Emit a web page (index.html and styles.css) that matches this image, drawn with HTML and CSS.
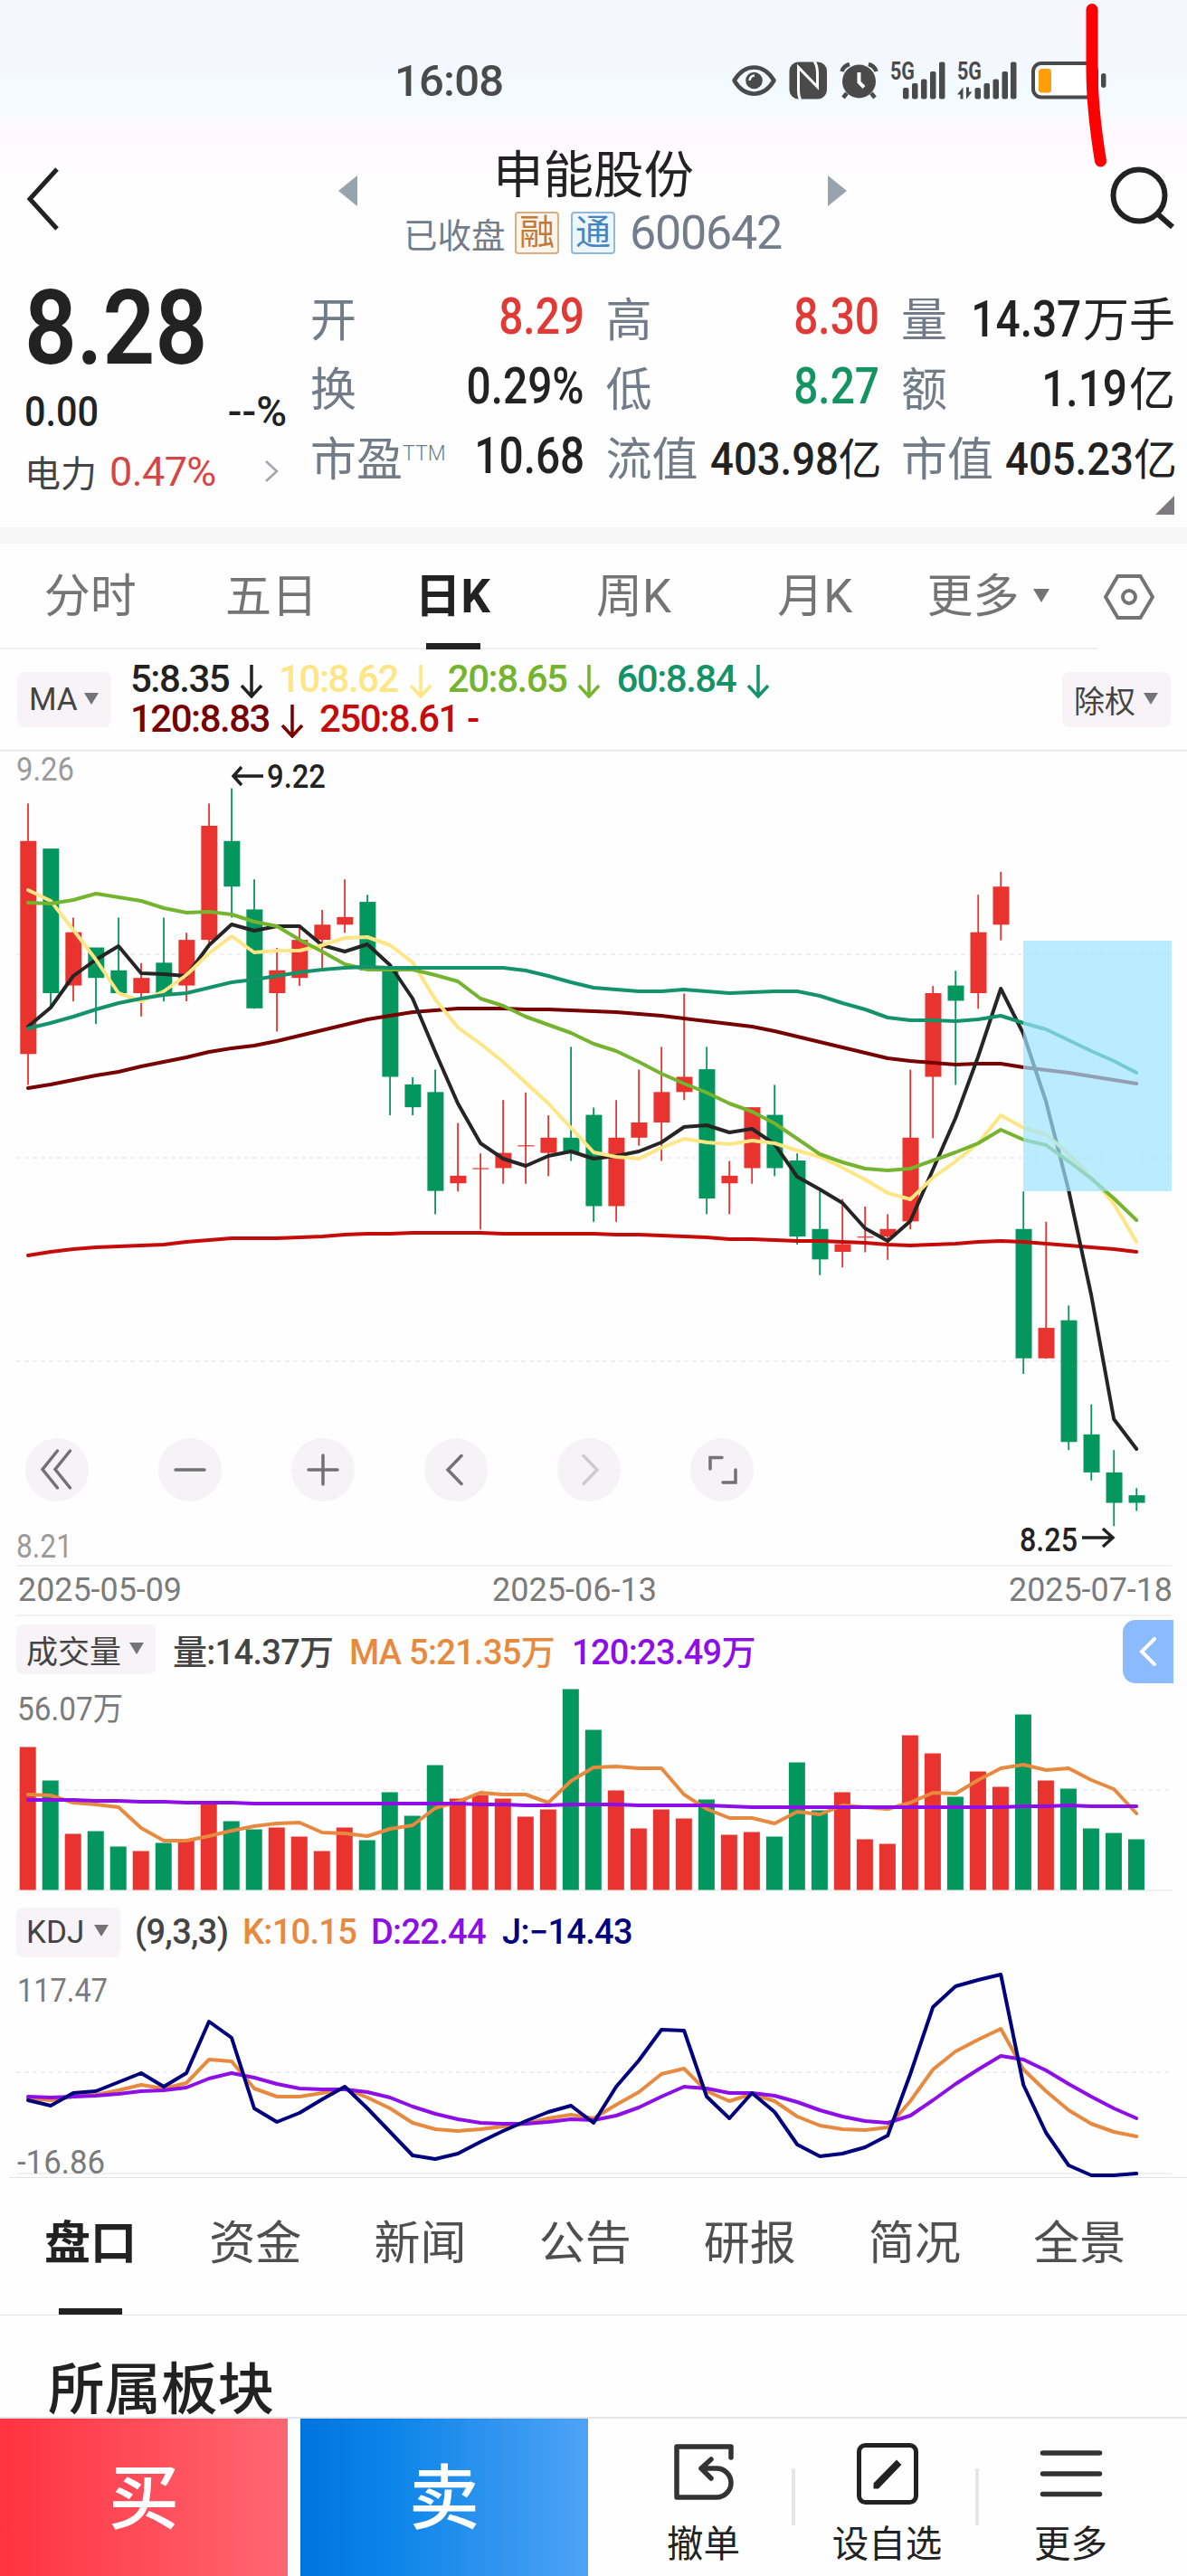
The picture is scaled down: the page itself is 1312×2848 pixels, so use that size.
FILE: index.html
```html
<!DOCTYPE html>
<html lang="zh-CN">
<head>
  <meta charset="utf-8" />
  <meta name="viewport" content="width=device-width, initial-scale=1" />
  <title>申能股份 600642</title>
  <link rel="stylesheet" href="styles.css">
</head>

<body>

  <!-- 状态栏 -->
  <div class="status-bar">
    <span class="clock">16:08</span>
    <svg class="status-icons" viewBox="800 60 430 56" width="430" height="56">
      <g fill="none" stroke="#4a4a4a" stroke-width="4.5">
        <path d="M811.500 89C823 69.500 844 69.500 855.500 89C844 108.500 823 108.500 811.500 89Z" stroke-linejoin="round" />
      </g>
      <circle cx="833.500" cy="89" r="9.300" fill="#4a4a4a" />
      <path d="M828.500 89a5.500 5.500 0 0 1 5.500-5.500" fill="none" stroke="#fff" stroke-width="2.500" />
      <rect x="872.500" y="68.500" width="41.500" height="41" rx="10" fill="#4a4a4a" />
      <path d="M884.500 110Q882.500 106 882.500 100V74.500L903.500 96V82Q903.500 72 900 68" fill="none" stroke="#fff" stroke-width="3" />
      <path d="M887.500 84V104" fill="none" stroke="#4a4a4a" stroke-width="4" />
      <g fill="none" stroke="#4a4a4a" stroke-width="4">
        <path d="M930.500 79Q932 73 939 71M968.500 79Q967 73 960 71M936 103L932 108M963 103L967 108" stroke-width="4.500" />
      </g>
      <circle cx="949.500" cy="90" r="18.500" fill="#4a4a4a" />
      <path d="M949.500 80V91L955 96.500" fill="none" stroke="#fff" stroke-width="4" />
      <g fill="#4a4a4a">
        <text x="984" y="88" class="net" textLength="27" lengthAdjust="spacingAndGlyphs">5G</text>
        <rect x="998" y="97" width="6.500" height="12.500" rx="2" />
        <rect x="1008" y="92" width="6.500" height="17.500" rx="2" />
        <rect x="1018" y="87.500" width="6.500" height="22" rx="2" />
        <rect x="1028" y="79" width="6.500" height="30.500" rx="2" />
        <rect x="1038" y="68.500" width="6.500" height="41" rx="2" />
        <text x="1058" y="88" class="net" textLength="27" lengthAdjust="spacingAndGlyphs">5G</text>
        <path d="M1058 104.500L1064.500 96.500V109.500H1061.500V104.500ZM1074.500 101.500L1068 109.500V96.500H1071V101.500Z" />
        <rect x="1077.500" y="97" width="6.500" height="12.500" rx="2" />
        <rect x="1087.500" y="92" width="6.500" height="17.500" rx="2" />
        <rect x="1097.500" y="87.500" width="6.500" height="22" rx="2" />
        <rect x="1107.500" y="79" width="6.500" height="30.500" rx="2" />
        <rect x="1117" y="68.500" width="6.500" height="41" rx="2" />
        <rect x="1217" y="81" width="5.500" height="16" rx="2.700" />
      </g>
      <rect x="1142" y="70" width="70" height="37.500" rx="9" fill="#fff" stroke="#4a4a4a" stroke-width="4" />
      <rect x="1148" y="76" width="14" height="26.500" rx="3.500" fill="#ff9f0a" />
    </svg>
  </div>
  <svg class="pen-mark" viewBox="0 0 40 190" width="40" height="190">
    <path d="M17 10.500V75Q17 120 26.500 178" />
  </svg>

  <!-- 标题 -->
  <div class="header">
    <svg class="back" viewBox="0 0 40 70" width="40" height="70"><path d="M35 2L5 35L35 68" /></svg>
    <i class="arrow-left"></i>
    <div class="stock">
      <div class="stock-name">申能股份</div>
      <div class="stock-sub">
        <span class="closed">已收盘</span>
        <span class="tag rong">融</span>
        <span class="tag tong">通</span>
        <span class="code">600642</span>
      </div>
    </div>
    <i class="arrow-right"></i>
    <svg class="search" viewBox="0 0 72 72" width="72" height="72"><circle cx="32" cy="32" r="28.500" /><path d="M53 53L69 67" /></svg>
  </div>

  <!-- 行情 -->
  <div class="quote">
    <div class="quote-left">
      <div class="price">8.28</div>
      <div class="change"><span class="diff">0.00</span><span class="rate">--%</span></div>
      <div class="sector">
        <span>电力</span><b>0.47%</b>
        <svg viewBox="0 0 16 26" width="16" height="26"><path d="M2 2L14 13L2 24" /></svg>
      </div>
    </div>
    <div class="quote-grid">
      <div><label>开</label><span class="up"><i>8.29</i></span></div>
      <div><label>高</label><span class="up"><i>8.30</i></span></div>
      <div><label>量</label><span><i>14.37</i><em>万手</em></span></div>
      <div><label>换</label><span><i>0.29%</i></span></div>
      <div><label>低</label><span class="down"><i>8.27</i></span></div>
      <div><label>额</label><span><i>1.19</i><em>亿</em></span></div>
      <div><label>市盈<sup>TTM</sup></label><span><i>10.68</i></span></div>
      <div><label>流值</label><span class="small"><i>403.98</i><em>亿</em></span></div>
      <div><label>市值</label><span class="small"><i>405.23</i><em>亿</em></span></div>
    </div>
    <i class="corner"></i>
  </div>

  <!-- 周期 -->
  <div class="period-tabs">
    <span>分时</span>
    <span>五日</span>
    <span class="active">日K</span>
    <span>周K</span>
    <span>月K</span>
    <span class="more">更多<i class="tri"></i></span>
    <svg viewBox="0 0 56 50" width="56" height="50"><path d="M15.500 2H40.500L54 25L40.500 48H15.500L2 25Z" /><circle cx="28" cy="25" r="7" /></svg>
  </div>

  <!-- 均线 -->
  <div class="ma-row">
    <div class="badge ma-badge">MA<i class="tri"></i></div>
    <div class="ma-values">
      <div>
        <span class="m5">5:8.35<svg><use href="#down" /></svg></span>
        <span class="m10">10:8.62<svg><use href="#down" /></svg></span>
        <span class="m20">20:8.65<svg><use href="#down" /></svg></span>
        <span class="m60">60:8.84<svg><use href="#down" /></svg></span>
      </div>
      <div>
        <span class="m120">120:8.83<svg><use href="#down" /></svg></span>
        <span class="m250">250:8.61 -</span>
      </div>
    </div>
    <div class="badge adj-badge">除权<i class="tri"></i></div>
  </div>
  <svg class="defs"><symbol id="down" viewBox="0 0 26 38"><path d="M13 1V35M2 24L13 36L24 24" fill="none" stroke="currentColor" stroke-width="3.500" /></symbol></svg>

  <!-- K线图 -->
  <div class="chart-box">
    <svg id="kline" viewBox="0 829 1312 958" width="1312" height="958"></svg>
    <div class="tools">
      <button><svg viewBox="0 0 70 70"><path d="M35.500 14L19 34.500L35.500 55M49.500 14L33 34.500L49.500 55" /></svg></button>
      <button><svg viewBox="0 0 70 70"><path d="M19 35H51" /></svg></button>
      <button><svg viewBox="0 0 70 70"><path d="M19 35H51M35 19V51" /></svg></button>
      <button><svg viewBox="0 0 70 70"><path d="M41 19.500L26 35L41 50.500" /></svg></button>
      <button class="off"><svg viewBox="0 0 70 70"><path d="M29 19.500L44 35L29 50.500" /></svg></button>
      <button><svg viewBox="0 0 70 70"><path d="M22 34V21.500H35M36 49H50V35" /></svg></button>
    </div>
  </div>

  <!-- 成交量 -->
  <div class="ind-row vol-row">
    <div class="badge">成交量<i class="tri"></i></div>
    <span class="vol">量:14.37万</span>
    <span class="orange">MA 5:21.35万</span>
    <span class="purple">120:23.49万</span>
    <div class="side-btn"><svg viewBox="0 0 20 32" width="20" height="32"><path d="M17 2L3 16L17 30" /></svg></div>
  </div>
  <svg id="volume" viewBox="0 1862 1312 230" width="1312" height="230"></svg>

  <!-- KDJ -->
  <div class="ind-row kdj-row">
    <div class="badge">KDJ<i class="tri"></i></div>
    <span class="par">(9,3,3)</span>
    <span class="orange">K:10.15</span>
    <span class="purple">D:22.44</span>
    <span class="navy">J:−14.43</span>
  </div>
  <svg id="kdj" viewBox="0 2176 1312 232" width="1312" height="232"></svg>

  <!-- 资讯 -->
  <div class="info-tabs">
    <span class="active">盘口</span>
    <span>资金</span>
    <span>新闻</span>
    <span>公告</span>
    <span>研报</span>
    <span>简况</span>
    <span>全景</span>
  </div>
  <div class="section-title">所属板块</div>

  <!-- 底部操作 -->
  <div class="bottom-bar">
    <div class="trade buy">买</div>
    <div class="trade sell">卖</div>
    <div class="action">
      <svg viewBox="0 0 72 72" width="72" height="72" stroke="#333"><path d="M66 18V6H6V62H50A16 16 0 0 0 50 30H33M44 20L33 30L44 41" stroke-width="5.500" stroke-linecap="round" stroke-linejoin="round" /></svg>
      <span>撤单</span>
    </div>
    <div class="action">
      <svg viewBox="0 0 72 72" width="72" height="72" stroke="#222"><rect x="4.500" y="4.500" width="63" height="63" rx="7" stroke-width="5" /><path d="M21.500 51.500V47L46 22L50 26L25.500 51.500Z" fill="#222" stroke-width="2" /></svg>
      <span>设自选</span>
    </div>
    <div class="action">
      <svg viewBox="0 0 72 72" width="72" height="72" stroke="#333"><path d="M4.500 13H67.500M4.500 36H67.500M4.500 58.500H67.500" stroke-width="5.500" stroke-linecap="round" /></svg>
      <span>更多</span>
    </div>
  </div>

  <script src="chart.js"></script>
</body>
</html>
```
FILE: styles.css
```css
* {
  box-sizing: border-box;
}

body {
  margin: 0;
  width: 1312px;
  height: 2848px;
  overflow: hidden;
  position: relative;
  color: #222;
  font-family: Roboto, "Noto Sans CJK SC", sans-serif;
  background: linear-gradient(#f5f6fe 0, #f5f7fe 60px, #f3fbff 105px, #fff9ff 150px, #fefefe 200px);
}

svg {
  display: block;
  fill: none;
}

i, em {
  font-style: normal;
}

/* 状态栏 */
.status-bar {
  height: 150px;
  padding: 60px 82px 0 436px;
  display: flex;
  justify-content: space-between;
  align-items: flex-start;
}

.clock {
  font-size: 49px;
  line-height: 60px;
  font-weight: 500;
  color: #4a4a4a;
  letter-spacing: -0.8px;
}

.net {
  font-size: 27px;
  font-weight: 700;
}

.pen-mark {
  position: absolute;
  left: 1190px;
  top: 0;
}

.pen-mark path {
  stroke: #f00;
  stroke-width: 13;
  stroke-linecap: round;
}

/* 标题 */
.header {
  height: 160px;
  display: flex;
  align-items: flex-start;
}

.back {
  margin: 35px 306px 0 28px;
  stroke: #222;
  stroke-width: 5;
}

.arrow-left, .arrow-right {
  margin-top: 44px;
  border: 17.5px solid transparent;
}

.arrow-left {
  border-left: 0;
  border-right: 21px solid #98a4ad;
}

.arrow-right {
  border-right: 0;
  border-left: 21px solid #98a4ad;
}

.stock {
  width: 520px;
  text-align: center;
}

.stock-name {
  font-size: 55.5px;
  line-height: 60px;
  margin: 15px 0 0 2px;
}

.stock-sub {
  display: flex;
  align-items: center;
  height: 50px;
  margin: 7px 0 0 51px;
  color: #727c8a;
}

.closed {
  font-size: 37.5px;
  width: 123px;
  text-align: left;
}

.tag {
  width: 49px;
  height: 47px;
  line-height: 43px;
  font-size: 39px;
  border: 2px solid;
  border-radius: 4px;
  margin-right: 13px;
}

.rong {
  color: #c27a36;
  background: #fdf5ec;
  border-color: #d8ae84;
}

.tong {
  color: #4486c0;
  background: #eef6fd;
  border-color: #8fb9dd;
}

.code {
  font-size: 52px;
  margin-left: 3px;
  letter-spacing: -1.2px;
}

.search {
  margin: 34px 0 0 291px;
  stroke: #222;
  stroke-width: 6;
}

/* 行情 */
.quote {
  height: 291px;
  display: flex;
  position: relative;
  border-bottom: 18px solid #f6f6f6;
}

.quote-left {
  width: 343px;
  padding-left: 27px;
}

.price {
  height: 106px;
  font-size: 115px;
  line-height: 106px;
  font-weight: 600;
  transform: scaleX(.88);
  transform-origin: left;
}

.change {
  width: 290px;
  display: flex;
  justify-content: space-between;
  font-size: 46px;
  font-weight: 500;
  line-height: 78px;
}

.diff {
  transform: scaleX(.9);
  transform-origin: left;
}

.sector {
  display: flex;
  align-items: center;
  height: 54px;
  font-size: 40px;
  color: #444;
}

.sector b {
  font-size: 45px;
  font-weight: 400;
  letter-spacing: -0.6px;
  color: #d64545;
  margin: 0 53px 0 14px;
}

.sector svg {
  stroke: #a0a6ae;
  stroke-width: 2.5;
}

.quote-grid {
  display: grid;
  grid-template-columns: repeat(3, 303px);
  grid-auto-rows: 77px;
  column-gap: 23.5px;
  margin-top: 1px;
}

.quote-grid div {
  display: flex;
  justify-content: space-between;
  align-items: center;
  white-space: nowrap;
}

.quote-grid label {
  font-size: 51px;
  color: #727c88;
}

.quote-grid sup {
  font-size: 23px;
  font-weight: 300;
  vertical-align: 17px;
  line-height: 0;
}

.quote-grid span {
  font-size: 55px;
  font-weight: 500;
}

/* 数字压窄 */
.quote-grid i {
  display: inline-block;
  margin-left: -30px;
  transform: scaleX(.87);
  transform-origin: right;
}

.quote-grid em {
  font-size: 51px;
  font-weight: 400;
  margin-left: 2px;
}

.quote-grid .small {
  font-size: 50px;
}

.quote-grid .small i {
  transform: scaleX(.91);
}

.quote-grid .small em {
  font-size: 48px;
  margin: 0 -2px 0 0;
}

.quote-grid .up {
  color: #e03a36;
}

.quote-grid .down {
  color: #159463;
}

.corner {
  position: absolute;
  right: 14px;
  bottom: 14px;
  border-left: 21px solid transparent;
  border-bottom: 21px solid #7d7b80;
}

/* 周期 */
.period-tabs {
  height: 117px;
  display: flex;
  align-items: center;
  font-size: 51px;
  color: #747474;
  background: linear-gradient(#f0f0f0, #f0f0f0) 0 100% / 1214px 2px no-repeat;
}

.period-tabs span {
  width: 200.3px;
  height: 117px;
  line-height: 117px;
  text-align: center;
  text-indent: -1px;
}

.period-tabs .more {
  width: 219px;
  display: flex;
  align-items: center;
  padding-left: 24px;
}

.period-tabs .tri {
  margin: 0 0 3px 15px;
  border-width: 15px 9px 0;
}

.period-tabs svg {
  stroke: #747474;
  stroke-width: 4;
}

.active {
  position: relative;
  font-weight: 700;
  color: #222;
}

.active::after {
  content: "";
  position: absolute;
  left: 50%;
  bottom: 0;
  width: 60px;
  height: 7px;
  margin-left: -30px;
  background: #222;
}

.tri {
  display: inline-block;
  margin-bottom: 3px;
  border: 8px solid transparent;
  border-top: 13px solid #747474;
  border-bottom: 0;
}

.badge {
  display: flex;
  align-items: center;
  justify-content: space-between;
  border-radius: 8px;
  background: #f7f3f7;
  color: #444;
  font-size: 35px;
}

/* 均线 */
.ma-row {
  height: 111px;
  display: flex;
  align-items: center;
  padding: 0 18px 0 19px;
}

.ma-badge, .adj-badge {
  height: 61px;
  width: 104px;
  padding: 0 14px 0 13px;
}

.adj-badge {
  width: 120px;
  font-size: 34px;
}

.ma-values {
  flex: 1;
  padding: 0 0 2px 21px;
  font-size: 42px;
  font-weight: 500;
  line-height: 44px;
  letter-spacing: -1.5px;
}

.ma-values div {
  display: flex;
  height: 44px;
}

.ma-values span {
  display: flex;
  align-items: center;
  white-space: pre;
  margin-right: 17px;
}

.ma-values svg {
  width: 26px;
  height: 38px;
  margin: 4px 0 0 12px;
}

.m5 { color: #222; }
.m10 { color: #fee684; }
.m20 { color: #74b42f; }
.m60 { color: #14936a; }
.m120 { color: #780000; }
.m250 { color: #c60b0b; }

.defs {
  position: absolute;
  width: 0;
  height: 0;
}

/* 图表 */
.chart-box {
  position: relative;
  height: 958px;
}

.tools {
  position: absolute;
  left: 28px;
  top: 761px;
  display: flex;
  gap: 77px;
}

.tools button {
  width: 70px;
  height: 70px;
  padding: 0;
  border: 0;
  border-radius: 50%;
  background: #f6f3f7;
}

.tools path {
  stroke: #727272;
  stroke-width: 3.5;
  stroke-linecap: round;
}

.tools .off path {
  stroke: #ccc;
}

.ind-row {
  position: relative;
  display: flex;
  align-items: center;
  padding-left: 18px;
  font-size: 38px;
  font-weight: 500;
  letter-spacing: -0.7px;
  white-space: pre;
}

.ind-row .badge {
  height: 55px;
  padding: 0 13px 0 11px;
  font-weight: 400;
  letter-spacing: 0;
}

.vol-row {
  height: 75px;
  padding-bottom: 2px;
}

.vol-row .badge {
  width: 154px;
}

.kdj-row {
  height: 84px;
  padding-top: 4px;
}

.kdj-row .badge {
  width: 115px;
}

.vol {
  width: 195px;
  margin-left: 19px;
  color: #444;
}

.par {
  width: 119px;
  margin-left: 16px;
  color: #444;
}

.orange { color: #e78a40; }
.purple { color: #8d0ee6; }
.navy { color: #00007f; }

.vol-row .orange { width: 246px; }
.kdj-row .orange { width: 142px; }
.kdj-row .purple { width: 145px; }

.side-btn {
  position: absolute;
  left: 1241px;
  top: 4px;
  width: 56px;
  height: 70px;
  padding: 19px 18px;
  background: #8bbaff;
  border-radius: 14px 0 0 14px;
}

.side-btn path {
  stroke: #fff;
  stroke-width: 4;
  stroke-linecap: round;
}

/* 图内文字 */
.axis { fill: #7b7b7b; font-size: 36px; }
.pale { fill: #9b9a9c; font-size: 37px; }
.mark { fill: #222; font-size: 36px; font-weight: 500; }
.line { stroke-width: 4; stroke-linejoin: round; stroke-linecap: round; }
.grid { stroke: #f1eff2; stroke-width: 2; stroke-dasharray: 5 4; }
.base { stroke: #f1f1f2; stroke-width: 2; }

/* 资讯 */
.info-tabs {
  height: 152px;
  display: flex;
  padding-left: 9px;
  font-size: 51px;
  line-height: 146px;
  color: #4f4f4f;
  border-bottom: 1px solid #e4e4e4;
}

.info-tabs span {
  width: 182.2px;
  text-align: center;
}

.info-tabs .active::after {
  width: 70px;
  margin-left: -35px;
}

.section-title {
  height: 114px;
  padding-left: 53px;
  font-size: 62.5px;
  font-weight: 500;
  line-height: 165px;
  overflow: hidden;
  border-bottom: 2px solid #e6e4e6;
}

/* 底部操作 */
.bottom-bar {
  display: flex;
  height: 174px;
  background: #fefefe;
}

.trade {
  width: 318px;
  margin-right: 14px;
  text-align: center;
  font-size: 78px;
  font-weight: 500;
  line-height: 180px;
  color: #fff;
}

.buy {
  background: linear-gradient(90deg, #ff3341, #ff6672);
}

.sell {
  margin-right: 26px;
  background: linear-gradient(90deg, #0074df, #0a84e8 30%, #4fa3f6);
}

.action {
  width: 203px;
  display: flex;
  flex-direction: column;
  align-items: center;
  padding-top: 25px;
  background: linear-gradient(#e6e6e6, #e6e6e6) 100% 55px / 4px 63px no-repeat;
}

.action:last-child {
  background: none;
}

.action span {
  font-size: 40.5px;
  line-height: 50px;
  margin-top: 17px;
}
```
FILE: chart.js
```js
const UP = "#e9332f";
const DOWN = "#03965f";
const STEP = 25.005;

// 颜色, 最高, 实体上沿, 实体下沿, 最低 (单位: 分)
const candles = [
  ["r", 920, 915, 887, 883], ["g", 914, 914, 895, 893], ["r", 905, 903, 896, 894], ["g", 901, 901, 897, 891],
  ["g", 905, 898, 895, 895], ["r", 899, 897, 895, 892], ["g", 905, 899, 895, 894], ["r", 903, 902, 896, 894],
  ["r", 920, 917, 902, 901], ["g", 922, 915, 909, 905], ["g", 910, 906, 893, 893], ["r", 901, 898, 895, 890],
  ["r", 904, 902, 897, 896], ["r", 906, 904, 902, 898], ["r", 910, 905, 904, 903], ["g", 908, 907, 898, 898],
  ["g", 898, 898, 884, 879], ["g", 884, 883, 880, 879], ["g", 885, 882, 869, 866], ["r", 878, 871, 870, 869],
  ["r", 874, 872, 872, 864], ["r", 881, 874, 872, 870], ["r", 882, 875, 875, 870], ["r", 879, 876, 874, 871],
  ["g", 888, 876, 874, 873], ["g", 880, 879, 867, 865], ["r", 881, 876, 867, 865], ["r", 885, 878, 876, 875],
  ["r", 888, 882, 878, 873], ["r", 895, 884, 882, 881], ["g", 888, 885, 868, 866], ["r", 873, 871, 870, 866],
  ["r", 880, 880, 872, 870], ["g", 883, 879, 872, 871], ["g", 874, 873, 863, 862], ["g", 869, 864, 860, 858],
  ["r", 868, 862, 861, 859], ["r", 867, 863, 863, 861], ["r", 866, 864, 863, 860], ["r", 885, 876, 865, 864],
  ["r", 896, 895, 884, 876], ["g", 898, 896, 894, 883], ["r", 908, 903, 895, 893], ["r", 911, 909, 904, 902],
  ["g", 869, 864, 847, 845], ["r", 865, 851, 847, 847], ["g", 854, 852, 836, 835], ["g", 841, 837, 832, 831],
  ["g", 835, 832, 828, 825], ["g", 830, 829, 828, 827]
];

const ma = {
  "#780000": [1203, 1199, 1194, 1189, 1185, 1179, 1174, 1169, 1163, 1159, 1156, 1151, 1145, 1139, 1133, 1127, 1123, 1119, 1117, 1115, 1115, 1115, 1116, 1116, 1117, 1118, 1119, 1121, 1123, 1126, 1129, 1132, 1135, 1140, 1146, 1152, 1158, 1164, 1170, 1173, 1175, 1177, 1176, 1176, 1180, 1183, 1186, 1190, 1194, 1198],
  "#c60b0b": [1388, 1384, 1381, 1379, 1378, 1377, 1376, 1373, 1371, 1369, 1369, 1369, 1368, 1367, 1365, 1364, 1364, 1363, 1363, 1363, 1363, 1364, 1364, 1364, 1364, 1364, 1365, 1365, 1366, 1367, 1368, 1370, 1370, 1371, 1372, 1372, 1373, 1374, 1376, 1377, 1376, 1375, 1373, 1372, 1373, 1375, 1377, 1379, 1381, 1384],
  "#252525": [1135, 1114, 1079, 1061, 1046, 1076, 1077, 1079, 1045, 1022, 1029, 1024, 1024, 1045, 1052, 1044, 1067, 1104, 1163, 1220, 1264, 1281, 1289, 1278, 1273, 1281, 1278, 1273, 1263, 1246, 1244, 1252, 1248, 1265, 1301, 1315, 1330, 1358, 1372, 1350, 1293, 1236, 1168, 1093, 1143, 1218, 1316, 1432, 1569, 1602],
  "#fee684": [984, 996, 1028, 1061, 1098, 1107, 1096, 1078, 1054, 1035, 1053, 1051, 1051, 1045, 1037, 1036, 1045, 1064, 1105, 1136, 1154, 1174, 1197, 1220, 1247, 1274, 1279, 1281, 1269, 1259, 1263, 1265, 1261, 1264, 1272, 1279, 1291, 1304, 1319, 1326, 1302, 1284, 1264, 1233, 1247, 1254, 1276, 1302, 1331, 1373],
  "#74b42f": [998, 999, 995, 988, 992, 996, 1004, 1009, 1008, 1011, 1019, 1024, 1039, 1052, 1066, 1072, 1072, 1072, 1078, 1085, 1104, 1112, 1124, 1133, 1142, 1154, 1162, 1174, 1187, 1198, 1208, 1220, 1229, 1242, 1259, 1276, 1285, 1292, 1294, 1292, 1283, 1274, 1264, 1249, 1260, 1266, 1284, 1303, 1325, 1349],
  "#14936a": [1137, 1131, 1124, 1116, 1109, 1104, 1100, 1098, 1092, 1086, 1083, 1079, 1075, 1072, 1070, 1069, 1070, 1070, 1070, 1070, 1070, 1070, 1073, 1079, 1086, 1092, 1094, 1096, 1096, 1094, 1096, 1098, 1097, 1096, 1096, 1101, 1109, 1116, 1125, 1128, 1128, 1129, 1127, 1123, 1131, 1138, 1150, 1162, 1173, 1186]
};

const vols = [158, 121, 62, 65, 48, 43, 52, 55, 95, 76, 67, 69, 59, 43, 69, 55, 108, 82, 138, 101, 105, 101, 81, 89, 222, 177, 110, 68, 89, 79, 100, 61, 64, 59, 141, 88, 108, 56, 51, 171, 151, 103, 131, 114, 194, 121, 112, 68, 63, 56];

const volMa = {
  "#e78a40": [1984, 1985, 1993, 1995, 1998, 2021, 2035, 2035, 2030, 2024, 2019, 2016, 2015, 2026, 2027, 2030, 2022, 2018, 1999, 1992, 1982, 1984, 1984, 1993, 1969, 1954, 1953, 1955, 1955, 1984, 2000, 2010, 2010, 2016, 2003, 2006, 1996, 1998, 2000, 1993, 1982, 1983, 1968, 1955, 1951, 1957, 1955, 1968, 1978, 2005],
  "#8d0ee6": [1990, 1990, 1990, 1991, 1991, 1992, 1992, 1993, 1993, 1993, 1994, 1994, 1994, 1994, 1994, 1994, 1994, 1994, 1994, 1994, 1995, 1995, 1996, 1996, 1995, 1995, 1995, 1996, 1996, 1996, 1996, 1997, 1998, 1998, 1998, 1998, 1998, 1998, 1998, 1998, 1998, 1998, 1998, 1998, 1997, 1997, 1996, 1997, 1997, 1997]
};

const kdjLines = {
  "#e78a40": [2320, 2322, 2318, 2316, 2311, 2305, 2309, 2303, 2277, 2279, 2309, 2318, 2318, 2314, 2309, 2319, 2331, 2347, 2354, 2356, 2354, 2351, 2348, 2342, 2338, 2342, 2327, 2313, 2293, 2287, 2312, 2323, 2315, 2323, 2340, 2350, 2354, 2355, 2352, 2323, 2288, 2268, 2255, 2243, 2288, 2312, 2333, 2348, 2357, 2362],
  "#8d0ee6": [2318, 2319, 2318, 2317, 2315, 2312, 2311, 2308, 2298, 2292, 2297, 2304, 2309, 2310, 2310, 2313, 2319, 2329, 2337, 2343, 2347, 2348, 2348, 2346, 2343, 2344, 2339, 2330, 2318, 2307, 2309, 2314, 2314, 2317, 2324, 2333, 2340, 2345, 2347, 2339, 2322, 2304, 2288, 2273, 2277, 2289, 2304, 2318, 2331, 2342],
  "#00007f": [2322, 2328, 2314, 2312, 2302, 2292, 2307, 2292, 2235, 2253, 2331, 2346, 2336, 2321, 2307, 2331, 2357, 2383, 2387, 2381, 2368, 2356, 2345, 2335, 2328, 2347, 2307, 2278, 2244, 2245, 2318, 2342, 2314, 2335, 2371, 2384, 2381, 2374, 2361, 2293, 2219, 2196, 2189, 2183, 2305, 2358, 2394, 2405, 2405, 2403]
};

const cx = i => 31 + i * STEP;
const py = fen => 871.4 + (922 - fen) * 8.411;

function lines(group) {
  return Object.keys(group).map(color => {
    const pts = group[color].map((y, i) => cx(i).toFixed(1) + "," + y).join(" ");
    return `<polyline class="line" stroke="${color}" points="${pts}"/>`;
  }).join("");
}

function text(cls, x, y, len, str) {
  return `<text class="${cls}" x="${x}" y="${y}" textLength="${len}" lengthAdjust="spacingAndGlyphs">${str}</text>`;
}

function hline(cls, y, x = 18) {
  return `<path class="${cls}" d="M${x} ${y}H1295"/>`;
}

function drawKline() {
  let out = `<path stroke="#e4e4e4" stroke-width="2" d="M0 829.500H1312"/>`;
  out += hline("grid", 1055) + hline("grid", 1280) + hline("grid", 1505);
  out += hline("base", 1731) + hline("base", 1786);
  candles.forEach(([c, hi, top, bot, lo], i) => {
    const color = c === "r" ? UP : DOWN;
    const x = cx(i);
    out += `<path stroke="${color}" stroke-width="1.800" d="M${x} ${py(hi)}V${py(lo)}"/>`;
    out += `<rect fill="${color}" x="${x - 8.7}" y="${py(top) - 0.5}" width="18" height="${Math.max(1.2, py(bot) - py(top))}"/>`;
  });
  out += lines(ma);
  out += `<rect x="1131" y="1040" width="164" height="277" fill="rgba(158,226,255,.7)"/>`;
  out += text("pale", 18, 863, 64, "9.26") + text("pale", 18, 1722, 62, "8.21");
  out += text("mark", 295, 871, 65, "9.22") + text("mark", 1127, 1715, 64, "8.25");
  out += `<path stroke="#222" stroke-width="3.500" d="M291 858H258M267 848L258 858L267 868M1196 1700H1230M1219 1690L1230 1700L1219 1710"/>`;
  out += text("axis", 20, 1770, 181, "2025-05-09") + text("axis", 544, 1770, 182, "2025-06-13") + text("axis", 1115, 1770, 181, "2025-07-18");
  document.getElementById("kline").innerHTML = out;
}

function drawVolume() {
  let out = hline("grid", 1979) + hline("base", 2090);
  vols.forEach((h, i) => {
    out += `<rect fill="${candles[i][0] === "r" ? UP : DOWN}" x="${cx(i) - 9.3}" y="${2089.5 - h}" width="18" height="${h}"/>`;
  });
  out += lines(volMa) + text("axis", 19, 1902, 117, "56.07万");
  document.getElementById("volume").innerHTML = out;
}

function drawKdj() {
  let out = hline("grid", 2291) + hline("base", 2403);
  out += `<path stroke="#e4e4e4" d="M10 2407.500H1312"/>`;
  out += lines(kdjLines) + text("axis", 19, 2213, 100, "117.47") + text("axis", 19, 2403, 97, "-16.86");
  document.getElementById("kdj").innerHTML = out;
}

drawKline();
drawVolume();
drawKdj();
```
